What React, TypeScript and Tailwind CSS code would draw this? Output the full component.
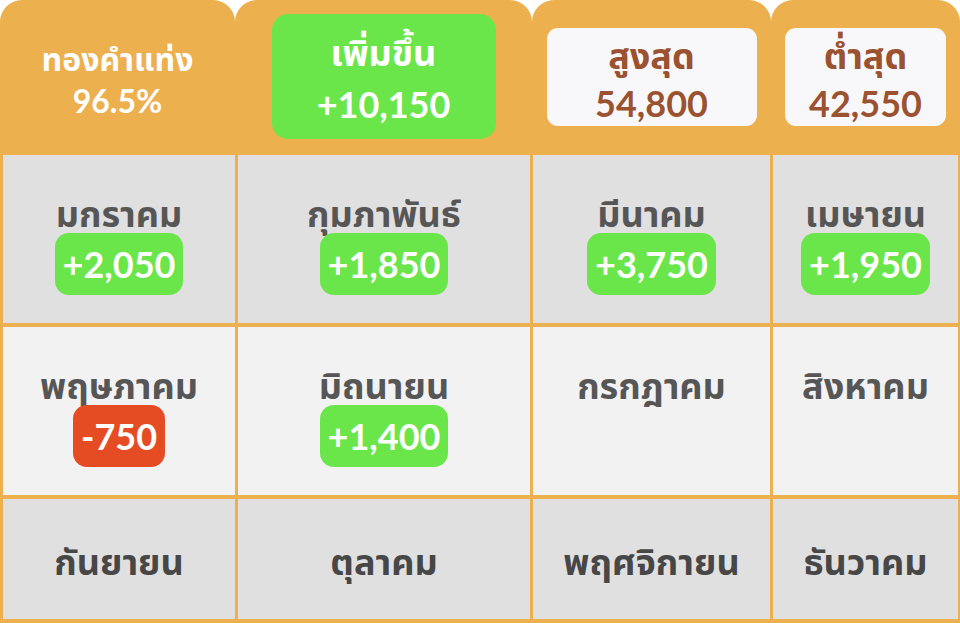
import React from "react";

const FONT = { fontFamily: 'Lato, "Noto Sans Thai", "Noto Sans", "Noto Sans Thai Looped", sans-serif' };

type Cell = { name: string; value?: string; neg?: boolean };

const rows: { bg: string; cells: Cell[]; tall: boolean }[] = [
  {
    bg: "bg-[#e1e0e1]",
    tall: true,
    cells: [
      { name: "มกราคม", value: "+2,050" },
      { name: "กุมภาพันธ์", value: "+1,850" },
      { name: "มีนาคม", value: "+3,750" },
      { name: "เมษายน", value: "+1,950" },
    ],
  },
  {
    bg: "bg-[#f2f2f3]",
    tall: true,
    cells: [
      { name: "พฤษภาคม", value: "-750", neg: true },
      { name: "มิถนายน", value: "+1,400" },
      { name: "กรกฎาคม" },
      { name: "สิงหาคม" },
    ],
  },
  {
    bg: "bg-[#e1e0e1]",
    tall: false,
    cells: [
      { name: "กันยายน" },
      { name: "ตุลาคม" },
      { name: "พฤศจิกายน" },
      { name: "ธันวาคม" },
    ],
  },
];

function MonthCell({ cell, bg, tall }: { cell: Cell; bg: string; tall: boolean }) {
  if (!tall) {
    return (
      <div className={`${bg} flex items-center justify-center pt-[4px]`}>
        <span className="text-[36px] font-bold text-[#474747] leading-none">{cell.name}</span>
      </div>
    );
  }
  return (
    <div className={`${bg} flex flex-col items-center pt-[36px]`}>
      <span className="text-[36px] font-bold text-[#565656] leading-[44px]">{cell.name}</span>
      {cell.value && (
        <span
          className={`mt-[-2px] h-[62px] rounded-[14px] px-[8px] text-[36px] font-bold leading-[62px] text-white ${
            cell.neg ? "bg-[#e54c24]" : "bg-[#6be64a]"
          }`}
        >
          {cell.value}
        </span>
      )}
    </div>
  );
}

export default function App() {
  return (
    <div className="w-[960px] h-[623px] bg-white overflow-hidden" style={FONT}>
      {/* Header tabs */}
      <div className="flex h-[155px]">
        <div className="w-[235px] bg-[#edb04f] rounded-t-[22px] flex flex-col items-center justify-center text-white font-bold text-[32px] leading-[42px] pt-[4px]">
          <span>ทองคำแท่ง</span>
          <span>96.5%</span>
        </div>
        <div className="w-[297px] bg-[#edb04f] rounded-t-[22px] flex items-start justify-center pt-[14px]">
          <div className="w-[224px] h-[125px] bg-[#6be64a] rounded-[16px] flex flex-col items-center justify-center pt-[2px] text-white font-bold">
            <span className="text-[36px] leading-[52px]">เพิ่มขึ้น</span>
            <span className="text-[36px] leading-[52px]">+10,150</span>
          </div>
        </div>
        <div className="w-[239px] bg-[#edb04f] rounded-t-[22px] flex items-start justify-center pt-[28px]">
          <div className="w-[210px] h-[98px] bg-[#f8f8fa] rounded-[11px] flex flex-col items-center justify-center pt-[4px] text-[#9b5230] font-bold">
            <span className="text-[36px] leading-[48px]">สูงสุด</span>
            <span className="text-[36px] leading-[48px]">54,800</span>
          </div>
        </div>
        <div className="w-[189px] bg-[#edb04f] rounded-t-[22px] flex items-start justify-center pt-[28px]">
          <div className="w-[161px] h-[98px] bg-[#f8f8fa] rounded-[11px] flex flex-col items-center justify-center pt-[4px] text-[#9b5230] font-bold">
            <span className="text-[36px] leading-[48px]">ต่ำสุด</span>
            <span className="text-[36px] leading-[48px]">42,550</span>
          </div>
        </div>
      </div>
      {/* Body grid */}
      <div className="grid grid-cols-[232px_292px_237px_185px] grid-rows-[168px_168px_120px] gap-x-[3px] gap-y-[4px] bg-[#edb04f] pl-[3px] pr-[2px] pb-[4px]">
        {rows.map((r, ri) =>
          r.cells.map((c, ci) => <MonthCell key={`${ri}-${ci}`} cell={c} bg={r.bg} tall={r.tall} />)
        )}
      </div>
    </div>
  );
}
